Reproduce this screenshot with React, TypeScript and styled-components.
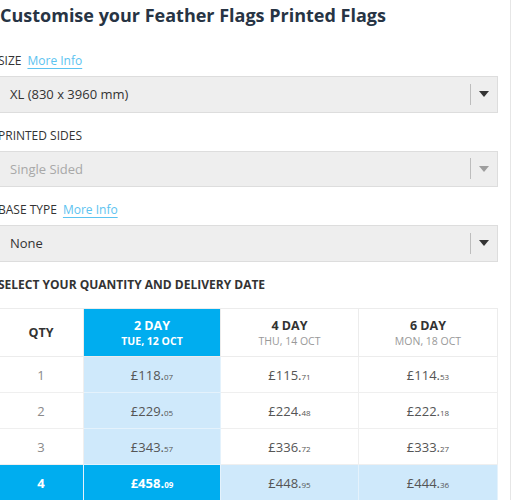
import React from 'react'
import styled, { createGlobalStyle } from 'styled-components'

const GlobalStyle = createGlobalStyle`
  body {
    margin: 0;
    background: #fff;
    font-family: 'Open Sans', 'Noto Sans', Arial, sans-serif;
  }
`

const Page = styled.div`
  box-sizing: border-box;
  width: 513px;
  margin-left: -2px;
  padding: 3px 12px 0 0;
  border-right: 1px solid #e6e6e6;
  height: 500px;
  overflow: hidden;
`

const Title = styled.h1`
  margin: 0 0 25px 2px;
  font-size: 18px;
  line-height: 24px;
  font-weight: 700;
  color: #273444;
`

const Field = styled.div`
  margin-bottom: 14px;
`

const Label = styled.div<{ $bold?: boolean }>`
  font-size: 12px;
  line-height: 18px;
  font-weight: ${(p) => (p.$bold ? 700 : 400)};
  color: #333;
  text-transform: uppercase;
  margin-bottom: ${(p) => (p.$bold ? '14.5px' : '6px')};
`

const MoreInfo = styled.a`
  margin-left: 6px;
  color: #5cc3f0;
  text-transform: none;
  text-decoration: underline;
  text-underline-offset: 3px;
  cursor: pointer;
`

const Select = styled.div<{ $disabled?: boolean }>`
  box-sizing: border-box;
  height: 36.5px;
  display: flex;
  align-items: center;
  background: #eeeeee;
  border: 1px solid #dddddd;
  padding-left: 11px;
  font-size: 13px;
  color: ${(p) => (p.$disabled ? '#a8a8a8' : '#333')};
`

const SelectValue = styled.span`
  flex: 1;
`

const Divider = styled.span`
  width: 1px;
  height: 21px;
  background: #bdbdbd;
`

const Arrow = styled.span<{ $disabled?: boolean }>`
  width: 0;
  height: 0;
  margin: 0 8px 0 8px;
  border-left: 5.5px solid transparent;
  border-right: 5.5px solid transparent;
  border-top: 6px solid ${(p) => (p.$disabled ? '#9e9e9e' : '#333')};
`

const Table = styled.table`
  width: 499px;
  border-collapse: collapse;
  table-layout: fixed;
  border: 1px solid #ececec;
`

const HeadCell = styled.th<{ $active?: boolean }>`
  height: 47px;
  padding: 0;
  text-align: center;
  vertical-align: middle;
  border: 1px solid #ececec;
  background: ${(p) => (p.$active ? '#00adef' : '#fff')};
  color: ${(p) => (p.$active ? '#fff' : '#333')};
`

const DayName = styled.div`
  font-size: 12.5px;
  font-weight: 700;
  line-height: 17px;
`

const DayDate = styled.div<{ $active?: boolean }>`
  font-size: 10.5px;
  line-height: 14px;
  font-weight: ${(p) => (p.$active ? 700 : 400)};
  color: ${(p) => (p.$active ? '#fff' : '#999')};
`

type Tone = 'plain' | 'soft' | 'strong'

const Cell = styled.td<{ $tone: Tone; $qty?: boolean }>`
  height: 35px;
  padding: 0;
  text-align: center;
  vertical-align: middle;
  border: 1px solid ${(p) => (p.$tone === 'plain' ? '#efefef' : '#e4f2fc')};
  background: ${(p) =>
    p.$tone === 'strong' ? '#00adef' : p.$tone === 'soft' ? '#cfe9fb' : '#fff'};
  color: ${(p) => (p.$tone === 'strong' ? '#fff' : p.$qty ? '#8a8a8a' : '#555')};
  font-weight: ${(p) => (p.$tone === 'strong' ? 700 : 400)};
  font-size: 13px;
`

const Pence = styled.span`
  font-size: 8px;
`

const days = [
  { name: '2 DAY', date: 'TUE, 12 OCT' },
  { name: '4 DAY', date: 'THU, 14 OCT' },
  { name: '6 DAY', date: 'MON, 18 OCT' },
]

const prices = [
  ['£118.07', '£115.71', '£114.53'],
  ['£229.05', '£224.48', '£222.18'],
  ['£343.57', '£336.72', '£333.27'],
  ['£458.09', '£448.95', '£444.36'],
]

const activeCol = 0
const activeRow = 3

const Price = ({ value }: { value: string }) => {
  const [pounds, pence] = value.split('.')
  return (
    <>
      {pounds}.<Pence>{pence}</Pence>
    </>
  )
}

const cellTone = (row: number, col: number): Tone => {
  if (row === activeRow && col === activeCol) return 'strong'
  if (row === activeRow || col === activeCol) return 'soft'
  return 'plain'
}

export default function App() {
  return (
    <>
      <GlobalStyle />
      <Page>
        <Title>Customise your Feather Flags Printed Flags</Title>

        <Field>
          <Label>
            Size<MoreInfo>More Info</MoreInfo>
          </Label>
          <Select>
            <SelectValue>XL (830 x 3960 mm)</SelectValue>
            <Divider />
            <Arrow />
          </Select>
        </Field>

        <Field>
          <Label>Printed Sides</Label>
          <Select $disabled>
            <SelectValue>Single Sided</SelectValue>
            <Divider />
            <Arrow $disabled />
          </Select>
        </Field>

        <Field>
          <Label>
            Base Type<MoreInfo>More Info</MoreInfo>
          </Label>
          <Select>
            <SelectValue>None</SelectValue>
            <Divider />
            <Arrow />
          </Select>
        </Field>

        <Label $bold>Select your quantity and delivery date</Label>

        <Table>
          <colgroup>
            <col style={{ width: 85 }} />
            <col style={{ width: 137 }} />
            <col style={{ width: 138 }} />
            <col style={{ width: 139 }} />
          </colgroup>
          <thead>
            <tr>
              <HeadCell>
                <DayName>QTY</DayName>
              </HeadCell>
              {days.map((d, i) => (
                <HeadCell key={d.name} $active={i === activeCol}>
                  <DayName>{d.name}</DayName>
                  <DayDate $active={i === activeCol}>{d.date}</DayDate>
                </HeadCell>
              ))}
            </tr>
          </thead>
          <tbody>
            {prices.map((row, r) => (
              <tr key={r}>
                <Cell $qty $tone={r === activeRow ? 'strong' : 'plain'}>
                  {r + 1}
                </Cell>
                {row.map((p, c) => (
                  <Cell key={c} $tone={cellTone(r, c)}>
                    <Price value={p} />
                  </Cell>
                ))}
              </tr>
            ))}
          </tbody>
        </Table>
      </Page>
    </>
  )
}
